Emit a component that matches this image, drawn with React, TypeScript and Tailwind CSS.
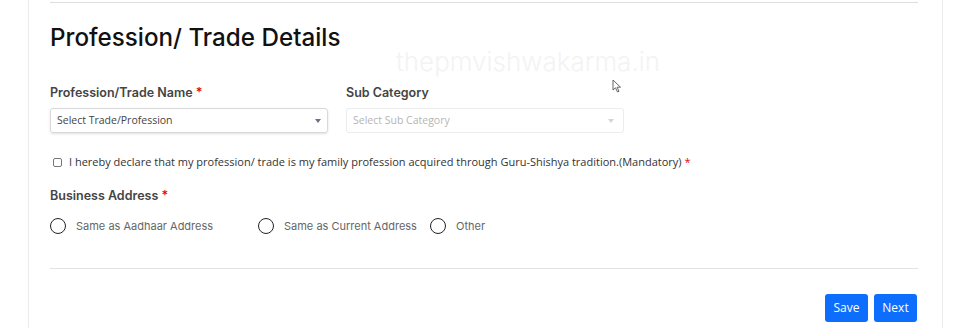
import React from "react";

const poppins = { fontFamily: "Inter, 'Noto Sans', sans-serif" };
const body = { fontFamily: "'Open Sans', 'Noto Sans', sans-serif" };

function Caret({ light }: { light?: boolean }) {
  return (
    <svg width="6" height="4" viewBox="0 0 6 4" className={light ? "text-gray-300" : "text-gray-500"}>
      <path d="M0 0 L6 0 L3 4 Z" fill="currentColor" />
    </svg>
  );
}

function Radio({ label, className }: { label: string; className?: string }) {
  return (
    <label className={"flex items-center gap-[10px] " + (className ?? "")}>
      <span className="inline-block h-4 w-4 rounded-full border-[1.5px] border-[#222]" />
      <span className="text-[11px] text-[#666]" style={poppins}>
        {label}
      </span>
    </label>
  );
}

export default function App() {
  return (
    <div className="relative h-[328px] w-[968px] overflow-hidden bg-white">
      <div className="ml-[28px] h-full w-[915px] border-x border-[#ececec] pl-[21px] pr-[24px]">
        <div className="h-[2px]" />
        <div className="border-t border-[#dedede]" />

        <h2 className="mt-[20px] text-[24.2px] font-medium leading-[30px] text-[#111]" style={poppins}>
          Profession/ Trade Details
        </h2>

        <div className="mt-[32px] flex gap-[18px]">
          <div className="w-[278px]">
            <div className="text-[12.5px] font-semibold leading-[16px] text-[#444]" style={poppins}>
              Profession/Trade Name <span className="text-red-600">*</span>
            </div>
            <div className="mt-[7px] flex h-[25px] items-center justify-between rounded-[3px] border border-[#d9d9d9] pl-[6px] pr-[6px] shadow-sm">
              <span className="text-[10.5px] text-[#444]" style={body}>
                Select Trade/Profession
              </span>
              <Caret />
            </div>
          </div>
          <div className="w-[278px]">
            <div className="text-[12.5px] font-semibold leading-[16px] text-[#444]" style={poppins}>
              Sub Category
            </div>
            <div className="mt-[7px] flex h-[25px] items-center justify-between rounded-[3px] border border-[#ececec] pl-[6px] pr-[9px]">
              <span className="text-[10.5px] text-[#b5b5b5]" style={body}>
                Select Sub Category
              </span>
              <Caret light />
            </div>
          </div>
        </div>

        <div className="mt-[21px] flex items-center pl-[3px]">
          <span className="inline-block h-[9px] w-[9px] rounded-[2px] border border-[#777]" />
          <span className="ml-[7px] text-[11px] text-[#333]" style={body}>
            I hereby declare that my profession/ trade is my family profession acquired through Guru-Shishya
            tradition.(Mandatory) <span className="text-red-600">*</span>
          </span>
        </div>

        <div className="mt-[17px] text-[12.5px] font-semibold leading-[16px] text-[#444]" style={poppins}>
          Business Address <span className="text-red-600">*</span>
        </div>

        <div className="mt-[14px] flex items-center">
          <Radio label="Same as Aadhaar Address" className="w-[208px]" />
          <Radio label="Same as Current Address" className="w-[172px]" />
          <Radio label="Other" />
        </div>

        <div className="mt-[34px] border-t border-[#e2e2e2]" />

        <div className="mt-[25px] flex justify-end gap-[6px] pr-[1px]">
          <button className="h-[28px] w-[43px] rounded-[3px] bg-[#0d6efd] text-[12px] text-white" style={body}>
            Save
          </button>
          <button className="h-[28px] w-[43px] rounded-[3px] bg-[#0d6efd] text-[12px] text-white" style={body}>
            Next
          </button>
        </div>
      </div>

      <div
        className="pointer-events-none absolute left-[396px] top-[42px] text-[26px] font-light text-[#f3f3f3]"
        style={poppins}
      >
        thepmvishwakarma.in
      </div>

      <svg className="pointer-events-none absolute left-[612px] top-[79px]" width="10" height="14" viewBox="0 0 10 14">
        <path d="M1 1 L1 11 L3.5 8.8 L5.5 13 L7 12.3 L5.1 8.2 L8.5 8.2 Z" fill="white" stroke="#555" strokeWidth="0.9" />
      </svg>
    </div>
  );
}
